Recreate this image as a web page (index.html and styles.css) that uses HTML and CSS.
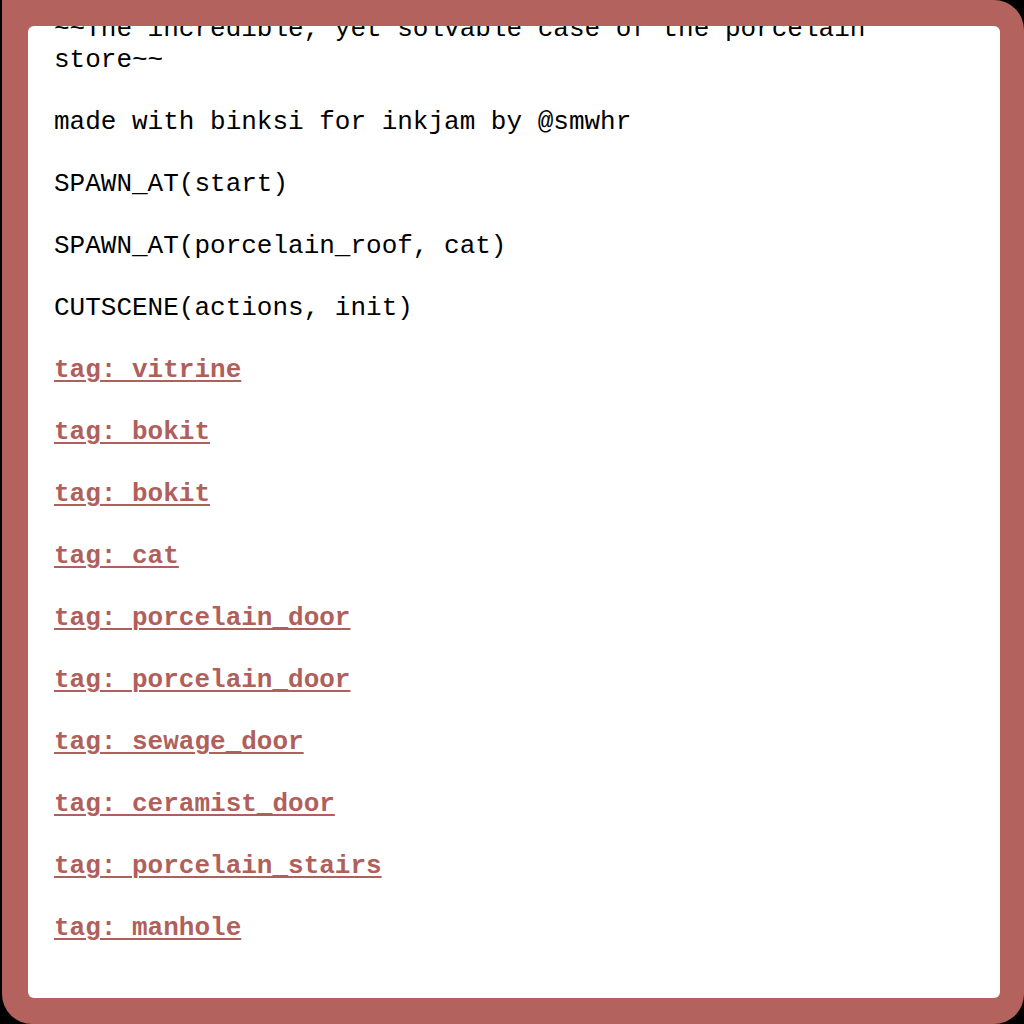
FILE: index.html
```html
<!DOCTYPE html>
<html>
<head>
<meta charset="utf-8">
<link rel="stylesheet" href="styles.css">
</head>
<body>
<div class="frame">
  <div class="sheet">
    <div class="content">
      <p>~~The incredible, yet solvable case of the porcelain store~~</p>
      <p>made with binksi for inkjam by @smwhr</p>
      <p>SPAWN_AT(start)</p>
      <p>SPAWN_AT(porcelain_roof, cat)</p>
      <p>CUTSCENE(actions, init)</p>
      <p><a class="tag" href="#">tag: vitrine</a></p>
      <p><a class="tag" href="#">tag: bokit</a></p>
      <p><a class="tag" href="#">tag: bokit</a></p>
      <p><a class="tag" href="#">tag: cat</a></p>
      <p><a class="tag" href="#">tag: porcelain_door</a></p>
      <p><a class="tag" href="#">tag: porcelain_door</a></p>
      <p><a class="tag" href="#">tag: sewage_door</a></p>
      <p><a class="tag" href="#">tag: ceramist_door</a></p>
      <p><a class="tag" href="#">tag: porcelain_stairs</a></p>
      <p><a class="tag" href="#">tag: manhole</a></p>
    </div>
  </div>
</div>
</body>
</html>
```

FILE: styles.css
```css
html, body {
  margin: 0;
  padding: 0;
  background: #000;
  overflow: hidden;
  width: 1024px;
  height: 1024px;
}

.frame {
  box-sizing: border-box;
  margin-left: 2px;
  width: 1022px;
  height: 1024px;
  background: #b3625d;
  border-radius: 0 30px 30px 30px;
  padding: 26px 24px 26px 26px;
}

.sheet {
  box-sizing: border-box;
  height: 100%;
  background: #fff;
  border-radius: 6px;
  overflow: hidden;
  padding: 0 26px;
}

.content {
  margin-top: -12px;
  font-family: "Courier New", Courier, "Nimbus Mono PS", "FreeMono", "Liberation Mono", monospace;
  font-size: 26px;
  line-height: 31px;
  color: #000;
}

.content p {
  margin: 0 0 31px 0;
}

.tag {
  color: #b0605b;
  font-weight: bold;
  text-decoration: underline;
  text-decoration-thickness: 2px;
  text-underline-offset: 3px;
}
```
